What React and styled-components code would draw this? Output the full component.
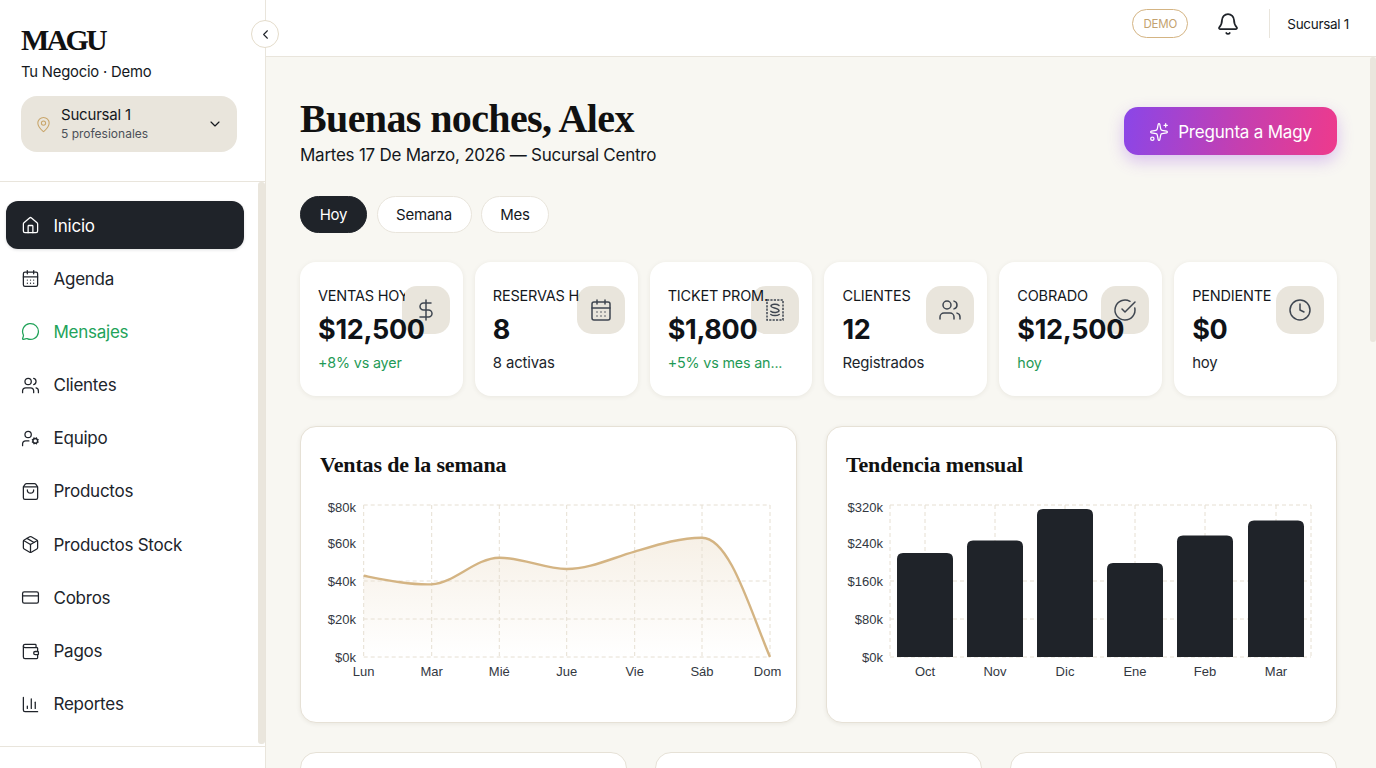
import React from "react";
import styled, { createGlobalStyle } from "styled-components";
import {
  House,
  CalendarDays,
  MessageCircle,
  Users,
  UserCog,
  ShoppingBag,
  Package,
  CreditCard,
  Wallet,
  ChartColumn,
  MapPin,
  ChevronDown,
  ChevronLeft,
  Bell,
  Sparkles,
  DollarSign,
  CircleCheckBig,
  Clock,
} from "lucide-react";

const SANS = `"Inter", "Liberation Sans", sans-serif`;
const SERIF = `"Liberation Serif", "Times New Roman", serif`;
const INK = "#1f2329";
const LINE = "#e9e5dc";
const GOLD = "#d4b483";
const GREEN = "#1f9a56";

const GlobalStyle = createGlobalStyle`
  html, body, #root { height: 100%; margin: 0; }
  body { overflow: hidden; font-family: ${SANS}; color: #14181d; background: #f8f7f2; }
  * { box-sizing: border-box; }
`;

const Shell = styled.div`
  display: flex;
  height: 100vh;
`;

const Sidebar = styled.aside`
  position: relative;
  flex: 0 0 266px;
  display: flex;
  flex-direction: column;
  background: #fff;
  border-right: 1px solid ${LINE};
`;

const Brand = styled.div`
  flex: 0 0 182px;
  padding: 24px 28px 0 21px;
  border-bottom: 1px solid ${LINE};
`;

const Logo = styled.div`
  font-family: ${SERIF};
  font-weight: 700;
  font-size: 30px;
  line-height: 32px;
  letter-spacing: -2.8px;
  color: #111;
`;

const Tagline = styled.div`
  margin-top: 7px;
  font-size: 14.8px;
  line-height: 18px;
  letter-spacing: -0.2px;
`;

const BranchCard = styled.div`
  display: flex;
  align-items: center;
  height: 56px;
  margin-top: 15px;
  padding: 0 14px 0 14px;
  border-radius: 16px;
  background: #e9e5dc;
`;

const BranchText = styled.div`
  flex: 1;
  margin-left: 9px;
`;

const BranchName = styled.div`
  margin-bottom: 2px;
  font-size: 15px;
  line-height: 18px;
  letter-spacing: -0.2px;
`;

const BranchSub = styled.div`
  font-size: 12px;
  line-height: 16px;
  color: #4c5058;
`;

const CollapseButton = styled.button`
  position: absolute;
  top: 20px;
  right: -14px;
  z-index: 3;
  display: flex;
  align-items: center;
  justify-content: center;
  width: 28px;
  height: 28px;
  padding: 0;
  border: 1px solid #e4dccb;
  border-radius: 50%;
  background: #fff;
  color: ${INK};
`;

const Nav = styled.nav`
  flex: 0 0 564px;
  padding: 19px 0 12px 6px;
  overflow: hidden;
`;

const NavItem = styled.a`
  display: flex;
  align-items: center;
  gap: 13.5px;
  width: 238px;
  height: 48px;
  margin-bottom: 5.2px;
  padding: 1px 0 0 15px;
  border-radius: 12px;
  font-size: 17px;
  letter-spacing: -0.25px;
  color: ${(p) => (p.$active ? "#fff" : p.$accent ? "#22a35a" : "#20242b")};
  background: ${(p) => (p.$active ? INK : "transparent")};
  box-shadow: ${(p) => (p.$active ? "0 1px 3px rgba(31,35,41,0.14)" : "none")};
`;

const SidebarFooter = styled.div`
  flex: 1;
  border-top: 1px solid ${LINE};
`;

const ScrollThumb = styled.span`
  position: absolute;
  top: ${(p) => p.$top}px;
  right: 0;
  width: ${(p) => p.$w}px;
  height: ${(p) => p.$h}px;
  border-radius: 3px;
  background: #eae6dd;
`;

const Main = styled.div`
  position: relative;
  flex: 1;
  min-width: 0;
  display: flex;
  flex-direction: column;
`;

const Topbar = styled.header`
  flex: 0 0 57px;
  display: flex;
  align-items: center;
  justify-content: flex-end;
  padding: 0 27px 9px 0;
  background: #fff;
  border-bottom: 1px solid ${LINE};
`;

const DemoPill = styled.span`
  display: flex;
  align-items: center;
  justify-content: center;
  width: 56px;
  height: 29px;
  border: 1px solid ${GOLD};
  border-radius: 15px;
  font-size: 11.5px;
  letter-spacing: -0.2px;
  color: #c3a26f;
`;

const BellWrap = styled.span`
  display: flex;
  margin-left: 28px;
  color: ${INK};
`;

const TopDivider = styled.span`
  width: 1px;
  height: 29px;
  margin: 0 17px 0 29px;
  background: ${LINE};
`;

const TopBranch = styled.span`
  font-size: 13.5px;
  letter-spacing: -0.3px;
`;

const Content = styled.main`
  flex: 1;
  min-height: 0;
  padding: 44px 39px 32px 34px;
  overflow: hidden;
`;

const PageHeader = styled.div`
  display: flex;
  justify-content: space-between;
  align-items: flex-start;
`;

const Title = styled.h1`
  margin: 0;
  font-family: ${SERIF};
  font-weight: 700;
  font-size: 40px;
  line-height: 36px;
  letter-spacing: -0.62px;
  color: #111;
`;

const Subtitle = styled.p`
  margin: 8px 0 0;
  font-size: 17px;
  line-height: 20px;
  letter-spacing: -0.25px;
`;

const AskButton = styled.button`
  display: flex;
  align-items: center;
  justify-content: center;
  gap: 9px;
  width: 213px;
  height: 48px;
  margin-top: 6px;
  padding: 1px 0 0;
  border: 0;
  border-radius: 14px;
  font-family: ${SANS};
  font-size: 17px;
  letter-spacing: -0.2px;
  color: #fff;
  background: linear-gradient(100deg, #8a46e8 0%, #c53fb0 55%, #ee3a8c 100%);
  box-shadow: 0 6px 16px rgba(150, 70, 230, 0.3);
`;

const Tabs = styled.div`
  display: flex;
  gap: 9.5px;
  margin-top: 31px;
`;

const Tab = styled.button`
  height: 37px;
  width: ${(p) => p.$w}px;
  padding: 0;
  border: 1px solid ${(p) => (p.$active ? INK : LINE)};
  border-radius: 19px;
  font-family: ${SANS};
  font-size: 15px;
  letter-spacing: -0.2px;
  color: ${(p) => (p.$active ? "#fff" : "#14181d")};
  background: ${(p) => (p.$active ? INK : "#fff")};
`;

const StatsRow = styled.section`
  display: grid;
  grid-template-columns: repeat(6, 1fr);
  gap: 12px;
  margin-top: 29px;
`;

const StatCard = styled.article`
  position: relative;
  height: 134px;
  padding: 25px 0 0 18px;
  border-radius: 16px;
  background: #fff;
  box-shadow: 0 1px 5px rgba(60, 50, 30, 0.08);
`;

const StatIcon = styled.div`
  position: absolute;
  top: 24px;
  right: 13px;
  display: flex;
  align-items: center;
  justify-content: center;
  width: 48px;
  height: 48px;
  border-radius: 15px;
  background: #e9e5dc;
  color: #3f4650;
`;

const StatLabel = styled.div`
  position: relative;
  max-width: ${(p) => p.$clip}px;
  overflow: hidden;
  white-space: nowrap;
  font-size: 14.5px;
  line-height: 18px;
  letter-spacing: -0.2px;
`;

const StatValue = styled.div`
  position: relative;
  margin-top: 7.5px;
  font-size: 27px;
  line-height: 34px;
  font-weight: 700;
  letter-spacing: -0.3px;
  color: #0f1318;
`;

const StatNote = styled.div`
  position: relative;
  margin-top: 7.5px;
  font-size: ${(p) => (p.$good ? "14.3px" : "14.9px")};
  line-height: 18px;
  letter-spacing: -0.15px;
  color: ${(p) => (p.$good ? GREEN : "#20242b")};
`;

const ChartsRow = styled.section`
  display: grid;
  grid-template-columns: 497px 511px;
  gap: 29px;
  margin-top: 30px;
`;

const ChartCard = styled.article`
  height: 297px;
  padding: 24px 19px 0;
  border: 1px solid #e6e1d6;
  border-radius: 16px;
  background: #fff;
  box-shadow: 0 1px 4px rgba(60, 50, 30, 0.08);
`;

const ChartTitle = styled.h2`
  margin: 0;
  font-family: ${SERIF};
  font-weight: 700;
  font-size: 22px;
  line-height: 28px;
  letter-spacing: -0.15px;
  color: #111;
`;

const ChartSvg = styled.svg`
  display: block;
  margin-top: 16px;
  overflow: visible;
  font-family: "Liberation Sans", Arial, sans-serif;
  font-size: 13px;
  fill: #33383f;
`;

const BottomRow = styled.section`
  display: grid;
  grid-template-columns: repeat(3, 1fr);
  gap: 28px;
  margin-top: 29px;
`;

const BottomCard = styled.article`
  height: 330px;
  border: 1px solid #e6e1d6;
  border-radius: 16px;
  background: #fff;
`;

// The stamp-like receipt in the "ticket" card, lucide has no close match
const TicketIcon = () => (
  <svg width="20" height="24" viewBox="0 0 20 24" fill="none" stroke="currentColor" strokeWidth="1.5">
    <rect x="2" y="2" width="16" height="20" strokeDasharray="2.2 1.2" />
    <path d="M14 7.5C12 5.8 6.5 6 6 8c-.4 2 8 2 8 4.6 0 2.2-6 2.6-8.2.6" strokeLinecap="round" />
    <path d="M5.8 16.5c2 1.4 6.4 1.4 8.4 0" strokeLinecap="round" />
  </svg>
);

const navItems = [
  { label: "Inicio", Icon: House, active: true },
  { label: "Agenda", Icon: CalendarDays },
  { label: "Mensajes", Icon: MessageCircle, accent: true },
  { label: "Clientes", Icon: Users },
  { label: "Equipo", Icon: UserCog },
  { label: "Productos", Icon: ShoppingBag },
  { label: "Productos Stock", Icon: Package },
  { label: "Cobros", Icon: CreditCard },
  { label: "Pagos", Icon: Wallet },
  { label: "Reportes", Icon: ChartColumn },
];

const stats = [
  { label: "VENTAS HOY", clip: 87, value: "$12,500", note: "+8% vs ayer", good: true, Icon: DollarSign },
  { label: "RESERVAS HOY", clip: 87, value: "8", note: "8 activas", Icon: CalendarDays },
  { label: "TICKET PROM.", clip: 100, value: "$1,800", note: "+5% vs mes an...", good: true, Icon: TicketIcon },
  { label: "CLIENTES", clip: 100, value: "12", note: "Registrados", Icon: Users },
  { label: "COBRADO", clip: 100, value: "$12,500", note: "hoy", good: true, Icon: CircleCheckBig },
  { label: "PENDIENTE", clip: 100, value: "$0", note: "hoy", Icon: Clock },
];

const GridLines = ({ xs, ys, left, right, top, bottom }) => (
  <g stroke="#e6dfd2" strokeWidth="1" strokeDasharray="4 3" fill="none">
    {ys.map((y) => (
      <line key={y} x1={left} x2={right} y1={y} y2={y} />
    ))}
    {xs.map((x) => (
      <line key={x} x1={x} x2={x} y1={top} y2={bottom} />
    ))}
  </g>
);

const YTicks = ({ labels, x }) => (
  <g textAnchor="end">
    {labels.map(([text, y]) => (
      <text key={text} x={x} y={y + 4.5}>
        {text}
      </text>
    ))}
  </g>
);

const SALES_LINE =
  "M363.7 575.7C386 580 410 585 431.7 584.3C455 583 475 558 499.3 557.7C522 557.5 545 569 566.7 569C590 569 612 558 634.7 551.7C657 545 680 537.5 702 537.7C730 538 750 610 770 657";

const WeekChart = () => {
  const days = [
    ["Lun", 363.7],
    ["Mar", 431.7],
    ["Mié", 499.3],
    ["Jue", 566.7],
    ["Vie", 634.7],
    ["Sáb", 702],
    ["Dom", 767.5],
  ];
  return (
    <ChartSvg width="457" height="190" viewBox="320 495 457 190">
      <defs>
        <linearGradient id="salesFill" x1="0" y1="0" x2="0" y2="1">
          <stop offset="0%" stopColor="#d4b483" stopOpacity="0.2" />
          <stop offset="100%" stopColor="#d4b483" stopOpacity="0" />
        </linearGradient>
      </defs>
      <path d={`${SALES_LINE}L363.7 657Z`} fill="url(#salesFill)" />
      <GridLines
        xs={[363.7, 431.7, 499.3, 566.7, 634.7, 702, 770]}
        ys={[505, 581, 619, 657]}
        left={363.7}
        right={770}
        top={505}
        bottom={657}
      />
      <path d={SALES_LINE} fill="none" stroke="#d4b483" strokeWidth="2.4" />
      <YTicks x={356} labels={[["$80k", 507.5], ["$60k", 543], ["$40k", 581], ["$20k", 619], ["$0k", 657]]} />
      <g textAnchor="middle">
        {days.map(([d, x]) => (
          <text key={d} x={x} y={676}>
            {d}
          </text>
        ))}
      </g>
    </ChartSvg>
  );
};

const MonthChart = () => {
  const bars = [
    ["Oct", 897, 553],
    ["Nov", 967, 540.5],
    ["Dic", 1037, 509],
    ["Ene", 1107, 563],
    ["Feb", 1177, 535.5],
    ["Mar", 1248, 520.5],
  ];
  return (
    <ChartSvg width="471" height="190" viewBox="846 495 471 190">
      <GridLines
        xs={[890, 925, 995, 1065, 1135, 1205, 1276, 1311]}
        ys={[505, 581, 619, 657]}
        left={890}
        right={1311}
        top={505}
        bottom={657}
      />
      {bars.map(([m, x, top]) => (
        <path
          key={m}
          d={`M${x} 657V${top + 6}Q${x} ${top} ${x + 6} ${top}H${x + 50}Q${x + 56} ${top} ${x + 56} ${top + 6}V657Z`}
          fill={INK}
        />
      ))}
      <YTicks x={883} labels={[["$320k", 507.5], ["$240k", 543], ["$160k", 581], ["$80k", 619], ["$0k", 657]]} />
      <g textAnchor="middle">
        {bars.map(([m, x]) => (
          <text key={m} x={x + 28} y={676}>
            {m}
          </text>
        ))}
      </g>
    </ChartSvg>
  );
};

const App = () => (
  <Shell>
    <GlobalStyle />
    <Sidebar>
      <CollapseButton aria-label="Colapsar">
        <ChevronLeft size={15} strokeWidth={1.75} />
      </CollapseButton>
      <Brand>
        <Logo>MAGU</Logo>
        <Tagline>Tu Negocio · Demo</Tagline>
        <BranchCard>
          <MapPin size={17} strokeWidth={1.5} color="#c9a66b" />
          <BranchText>
            <BranchName>Sucursal 1</BranchName>
            <BranchSub>5 profesionales</BranchSub>
          </BranchText>
          <ChevronDown size={16} strokeWidth={1.75} />
        </BranchCard>
      </Brand>
      <Nav>
        {navItems.map(({ label, Icon, active, accent }) => (
          <NavItem key={label} $active={active} $accent={accent}>
            <Icon size={19} strokeWidth={1.6} />
            {label}
          </NavItem>
        ))}
      </Nav>
      <SidebarFooter />
      <ScrollThumb $top={182} $w={7} $h={562} />
    </Sidebar>
    <Main>
      <Topbar>
        <DemoPill>DEMO</DemoPill>
        <BellWrap>
          <Bell size={24} strokeWidth={1.75} />
        </BellWrap>
        <TopDivider />
        <TopBranch>Sucursal 1</TopBranch>
      </Topbar>
      <Content>
        <PageHeader>
          <div>
            <Title>Buenas noches, Alex</Title>
            <Subtitle>Martes 17 De Marzo, 2026 — Sucursal Centro</Subtitle>
          </div>
          <AskButton>
            <Sparkles size={20} strokeWidth={1.5} />
            Pregunta a Magy
          </AskButton>
        </PageHeader>
        <Tabs>
          <Tab $active $w={67}>Hoy</Tab>
          <Tab $w={95}>Semana</Tab>
          <Tab $w={68}>Mes</Tab>
        </Tabs>
        <StatsRow>
          {stats.map(({ label, clip, value, note, good, Icon }) => (
            <StatCard key={label}>
              <StatIcon>
                <Icon size={24} strokeWidth={1.5} />
              </StatIcon>
              <StatLabel $clip={clip}>{label}</StatLabel>
              <StatValue>{value}</StatValue>
              <StatNote $good={good}>{note}</StatNote>
            </StatCard>
          ))}
        </StatsRow>
        <ChartsRow>
          <ChartCard>
            <ChartTitle>Ventas de la semana</ChartTitle>
            <WeekChart />
          </ChartCard>
          <ChartCard>
            <ChartTitle>Tendencia mensual</ChartTitle>
            <MonthChart />
          </ChartCard>
        </ChartsRow>
        <BottomRow>
          <BottomCard />
          <BottomCard />
          <BottomCard />
        </BottomRow>
      </Content>
      <ScrollThumb $top={57} $w={6} $h={285} />
    </Main>
  </Shell>
);

export default App;
